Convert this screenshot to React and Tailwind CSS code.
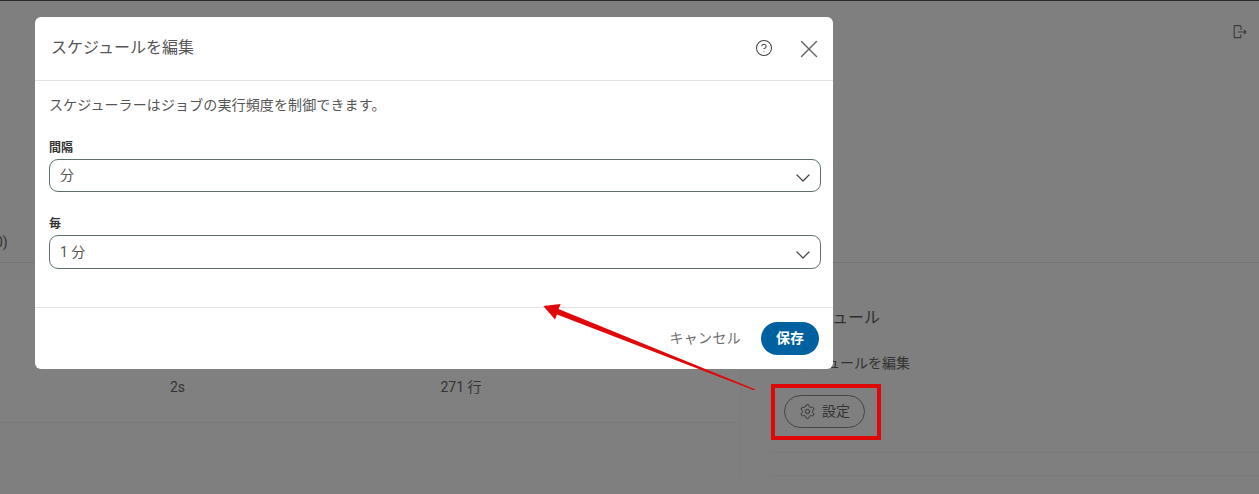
import { ChevronDown, CircleHelp, X, Settings } from "lucide-react";

const font = { fontFamily: '"Roboto", "Noto Sans CJK JP", sans-serif' };

function Field({ label, value, className, h }) {
  return (
    <div className={className}>
      <div className="text-[12px] leading-[16px] font-bold text-[#333]">{label}</div>
      <div className={`mt-[3px] ${h} rounded-[9px] border border-[#5f6f70] flex items-center justify-between pl-[10px] pr-[5px]`}>
        <span className="text-[14px] text-[#555]">{value}</span>
        <ChevronDown size={24} strokeWidth={1.2} className="text-[#444] mt-[5px]" />
      </div>
    </div>
  );
}

export default function App() {
  return (
    <div className="relative h-[494px] w-[1259px] overflow-hidden bg-[#7f7f7f]" style={font}>
      {/* page behind the dim layer */}
      <div className="h-[1px] bg-[#2b2b2b]" />
      <div className="h-[262px] border-b border-[#747474] flex flex-col justify-between">
        <div className="flex justify-end pt-[24px] pr-[12px]">
          <svg width="14" height="14" viewBox="0 0 14 14" fill="none" stroke="#3c3c3c" strokeWidth="1.1">
            <path d="M8 5V1.2L6 .6H1.2v12h6.6V9.5" />
            <path d="M5 7h8M11 5l2 2-2 2" />
          </svg>
        </div>
        <div className="text-[14px] text-[#333] leading-[20px] mb-[10px] -ml-[5px]">0)</div>
      </div>
      <div className="flex">
        <div className="w-[738px] mt-[19px] h-[141px] border-b border-[#7a7a7a] bg-[#808080]">
          <div className="flex pt-[95px] text-[14px] text-[#333] leading-[20px]">
            <div className="w-[355px] text-center">2s</div>
            <div className="w-[212px] text-center">271 行</div>
          </div>
        </div>
        <div className="flex-1 mt-[19px] ml-[2px] pl-[44px] border-l border-[#7b7b7b]">
          <div className="text-[16px] leading-[24px] pt-[24px] text-[#2f2f2f]">スケジュール</div>
          <div className="text-[14px] leading-[20px] mt-[23px] text-[#333]">スケジュールを編集</div>
          <button className="mt-[22px] -ml-[1px] h-[33px] w-[81px] rounded-full border border-[#444] flex items-center justify-center gap-[6px] text-[14px] text-[#333]">
            <Settings size={17} strokeWidth={1.4} />
            設定
          </button>
          <div className="mt-[24px] -ml-[16px] h-[24px] border-y border-[#7a7a7a]" />
        </div>
      </div>

      {/* dialog */}
      <div className="absolute left-[35px] top-[17px] w-[798px] h-[352px] bg-white rounded-[6px] flex flex-col">
        <div className="h-[64px] shrink-0 border-b border-[#e2e2e2] flex items-center pl-[16px] pr-[9px]">
          <div className="text-[16px] text-[#555] flex-1 -mt-[2px]">スケジュールを編集</div>
          <CircleHelp size={18} strokeWidth={1.4} className="text-[#444] mr-[21px] -mt-[2px]" />
          <X size={30} strokeWidth={1.1} className="text-[#666]" />
        </div>
        <div className="flex-1 pl-[14px] pr-[12px]">
          <div className="text-[14px] leading-[20px] tracking-[0.12px] text-[#555] pt-[14px]">スケジューラーはジョブの実行頻度を制御できます。</div>
          <Field label="間隔" value="分" className="mt-[25px]" h="h-[33px]" />
          <Field label="毎" value="1 分" className="mt-[24px]" h="h-[34px]" />
        </div>
        <div className="h-[62px] shrink-0 border-t border-[#e2e2e2] flex items-center justify-end pr-[14px] gap-[20px]">
          <span className="text-[14px] tracking-[0.3px] text-[#6f6f6f]">キャンセル</span>
          <button className="h-[33px] w-[58px] rounded-full bg-[#0061a0] text-white text-[14px] font-bold">保存</button>
        </div>
      </div>

      {/* annotation */}
      <div className="absolute left-[771px] top-[384px] w-[110px] h-[56px] border-[4px] border-[#e00707]" />
      <svg className="absolute left-0 top-0 pointer-events-none" width="1259" height="494">
        <path d="M755 389.3 L558.5 309 L560.7 304 L543.3 306 L555 319.5 L557 314.5 L754 390.3Z" fill="#e00808" />
      </svg>
    </div>
  );
}
